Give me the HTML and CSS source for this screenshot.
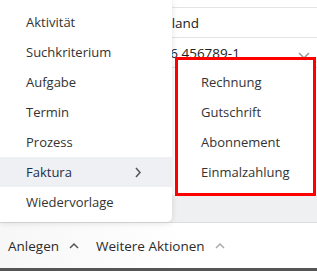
FILE: index.html
```html
<!DOCTYPE html>
<html lang="de">
<head>
  <meta charset="UTF-8" />
  <title>Anlegen</title>
  <link rel="stylesheet" href="styles.css">
</head>
<body>
  <div class="screen">
    <div class="content">
      <div class="form">
        <div class="form-row top"></div>
        <div class="form-row"><span>Deutschland</span></div>
        <div class="form-row">
          <span class="value-id">DE 126 456789-1</span>
          <svg class="select-arrow" width="12" height="8" viewBox="0 0 12 8"><polyline points="1,1 6,6 11,1" fill="none" stroke="#999" stroke-width="1.5"/></svg>
        </div>
      </div>
    </div>

    <div class="footer">
      <span class="action">Anlegen
        <svg width="10" height="7" viewBox="0 0 10 7"><polyline points="1,6 5,2 9,6" fill="none" stroke="#555" stroke-width="1.5"/></svg>
      </span>
      <span class="action">Weitere Aktionen
        <svg width="10" height="7" viewBox="0 0 10 7"><polyline points="1,6 5,2 9,6" fill="none" stroke="#aaa" stroke-width="1.5"/></svg>
      </span>
    </div>

    <ul class="menu">
      <li>Aktivität</li>
      <li>Suchkriterium</li>
      <li>Aufgabe</li>
      <li>Termin</li>
      <li>Prozess</li>
      <li class="active">Faktura
        <svg width="8" height="11" viewBox="0 0 8 11"><polyline points="2,1 6,5.5 2,10" fill="none" stroke="#555" stroke-width="1.5"/></svg>
      </li>
      <li>Wiedervorlage</li>
    </ul>

    <ul class="submenu">
      <li>Rechnung</li>
      <li>Gutschrift</li>
      <li>Abonnement</li>
      <li>Einmalzahlung</li>
    </ul>
  </div>
</body>
</html>
```

FILE: styles.css
```css
body {
  margin: 0;
  font-family: 'Open Sans', sans-serif;
  font-size: 13px;
  color: #333;
  background: #fff;
}

.screen {
  position: relative;
  width: 317px;
  height: 271px;
  overflow: hidden;
}

.content {
  height: 222px;
  background: #eef0f2;
  border-bottom: 1px solid #dcdee0;
}

.form {
  background: #fff;
  height: 195px;
  padding-left: 120px;
}

.form-row {
  height: 29px;
  border-bottom: 1px solid #e4e4e4;
  display: flex;
  align-items: center;
  justify-content: space-between;
  padding-right: 7px;
  color: #222;
  font-size: 13.5px;
}

.form-row.top {
  height: 7px;
}

.value-id {
  margin-left: 14px;
}

.select-arrow {
  margin-top: 6px;
}

.footer {
  height: 45px;
  display: flex;
  align-items: center;
  gap: 17px;
  padding-left: 8px;
  border-bottom: 3px solid #555;
  background: linear-gradient(to right, #f7f7f8, #fff 60%);
}

.action {
  display: flex;
  align-items: center;
  gap: 10px;
  font-size: 13.5px;
  color: #2b2b2b;
}

.menu {
  position: absolute;
  left: 0;
  top: 0;
  width: 172px;
  margin: 0;
  padding: 7px 0 5px;
  list-style: none;
  background: #fff;
  border-radius: 0 0 5px 0;
  box-shadow: 0 1px 6px rgba(0,0,0,0.12);
}

.menu li {
  height: 30px;
  display: flex;
  align-items: center;
  justify-content: space-between;
  padding: 0 30px 0 26px;
}

.menu li.active {
  background: #eef0f3;
  color: #1c2f4a;
}

.submenu {
  position: absolute;
  left: 175px;
  top: 57px;
  width: 135px;
  margin: 0;
  padding: 7px 0 6px;
  list-style: none;
  background: #fff;
  border: 3px solid #f00;
}

.submenu li {
  height: 30px;
  display: flex;
  align-items: center;
  padding-left: 23px;
}
```
